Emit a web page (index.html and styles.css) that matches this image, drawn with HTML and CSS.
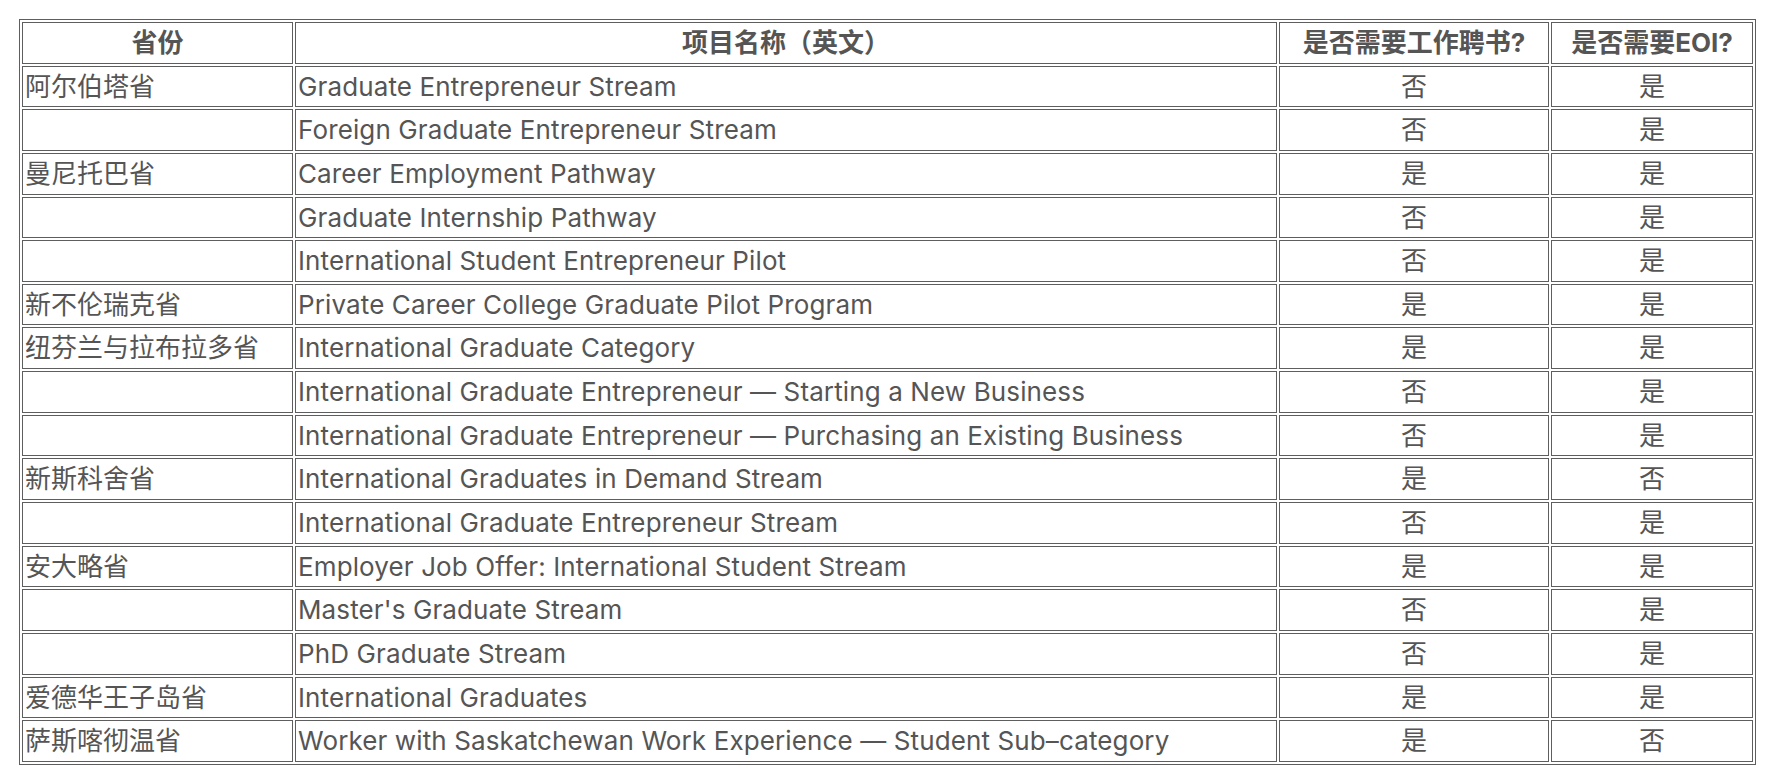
FILE: index.html
```html
<!DOCTYPE html>
<html lang="zh-CN">
<head>
<meta charset="utf-8">
<title>留学生省提名项目</title>
<link rel="stylesheet" href="styles.css">
</head>
<body>
<div class="page">
<table class="pnp">
<thead>
<tr>
<th class="c-prov">省份</th>
<th class="c-name">项目名称（英文）</th>
<th class="c-job">是否需要工作聘书?</th>
<th class="c-eoi">是否需要EOI?</th>
</tr>
</thead>
<tbody>
<tr><td>阿尔伯塔省</td><td class="en">Graduate Entrepreneur Stream</td><td class="yn">否</td><td class="yn">是</td></tr>
<tr><td></td><td class="en">Foreign Graduate Entrepreneur Stream</td><td class="yn">否</td><td class="yn">是</td></tr>
<tr><td>曼尼托巴省</td><td class="en">Career Employment Pathway</td><td class="yn">是</td><td class="yn">是</td></tr>
<tr><td></td><td class="en">Graduate Internship Pathway</td><td class="yn">否</td><td class="yn">是</td></tr>
<tr><td></td><td class="en">International Student Entrepreneur Pilot</td><td class="yn">否</td><td class="yn">是</td></tr>
<tr><td>新不伦瑞克省</td><td class="en">Private Career College Graduate Pilot Program</td><td class="yn">是</td><td class="yn">是</td></tr>
<tr><td>纽芬兰与拉布拉多省</td><td class="en">International Graduate Category</td><td class="yn">是</td><td class="yn">是</td></tr>
<tr><td></td><td class="en">International Graduate Entrepreneur — Starting a New Business</td><td class="yn">否</td><td class="yn">是</td></tr>
<tr><td></td><td class="en">International Graduate Entrepreneur — Purchasing an Existing Business</td><td class="yn">否</td><td class="yn">是</td></tr>
<tr><td>新斯科舍省</td><td class="en">International Graduates in Demand Stream</td><td class="yn">是</td><td class="yn">否</td></tr>
<tr><td></td><td class="en">International Graduate Entrepreneur Stream</td><td class="yn">否</td><td class="yn">是</td></tr>
<tr><td>安大略省</td><td class="en">Employer Job Offer: International Student Stream</td><td class="yn">是</td><td class="yn">是</td></tr>
<tr><td></td><td class="en">Master's Graduate Stream</td><td class="yn">否</td><td class="yn">是</td></tr>
<tr><td></td><td class="en">PhD Graduate Stream</td><td class="yn">否</td><td class="yn">是</td></tr>
<tr><td>爱德华王子岛省</td><td class="en">International Graduates</td><td class="yn">是</td><td class="yn">是</td></tr>
<tr><td>萨斯喀彻温省</td><td class="en">Worker with Saskatchewan Work Experience — Student Sub–category</td><td class="yn">是</td><td class="yn">否</td></tr>
</tbody>
</table>
</div>
</body>
</html>
```

FILE: styles.css
```css
html, body {
  margin: 0;
  padding: 0;
  background: #ffffff;
}

.page {
  padding: 19px 11px 10px 19px;
}

.pnp {
  width: 1737px;
  table-layout: fixed;
  border-collapse: separate;
  border-spacing: 2px;
  border: 1px solid #5e5e5e;
  font-family: Inter, "Noto Sans CJK SC", sans-serif;
  font-size: 26px;
  line-height: 37.65px;
  color: #555555;
}

.pnp th,
.pnp td {
  box-sizing: border-box;
  height: 41.65px;
  border: 1px solid #5e5e5e;
  padding: 0 2px;
  vertical-align: middle;
  white-space: nowrap;
  overflow: hidden;
  text-align: left;
  font-weight: 400;
}

.pnp th {
  text-align: center;
  font-weight: 700;
}

.pnp .c-prov { width: 271px; }
.pnp .c-name { width: 982px; }
.pnp .c-job  { width: 270px; }
.pnp .c-eoi  { width: 202px; }

.pnp td.en {
  letter-spacing: 0.12px;
}

.pnp td.yn {
  text-align: center;
}
```
